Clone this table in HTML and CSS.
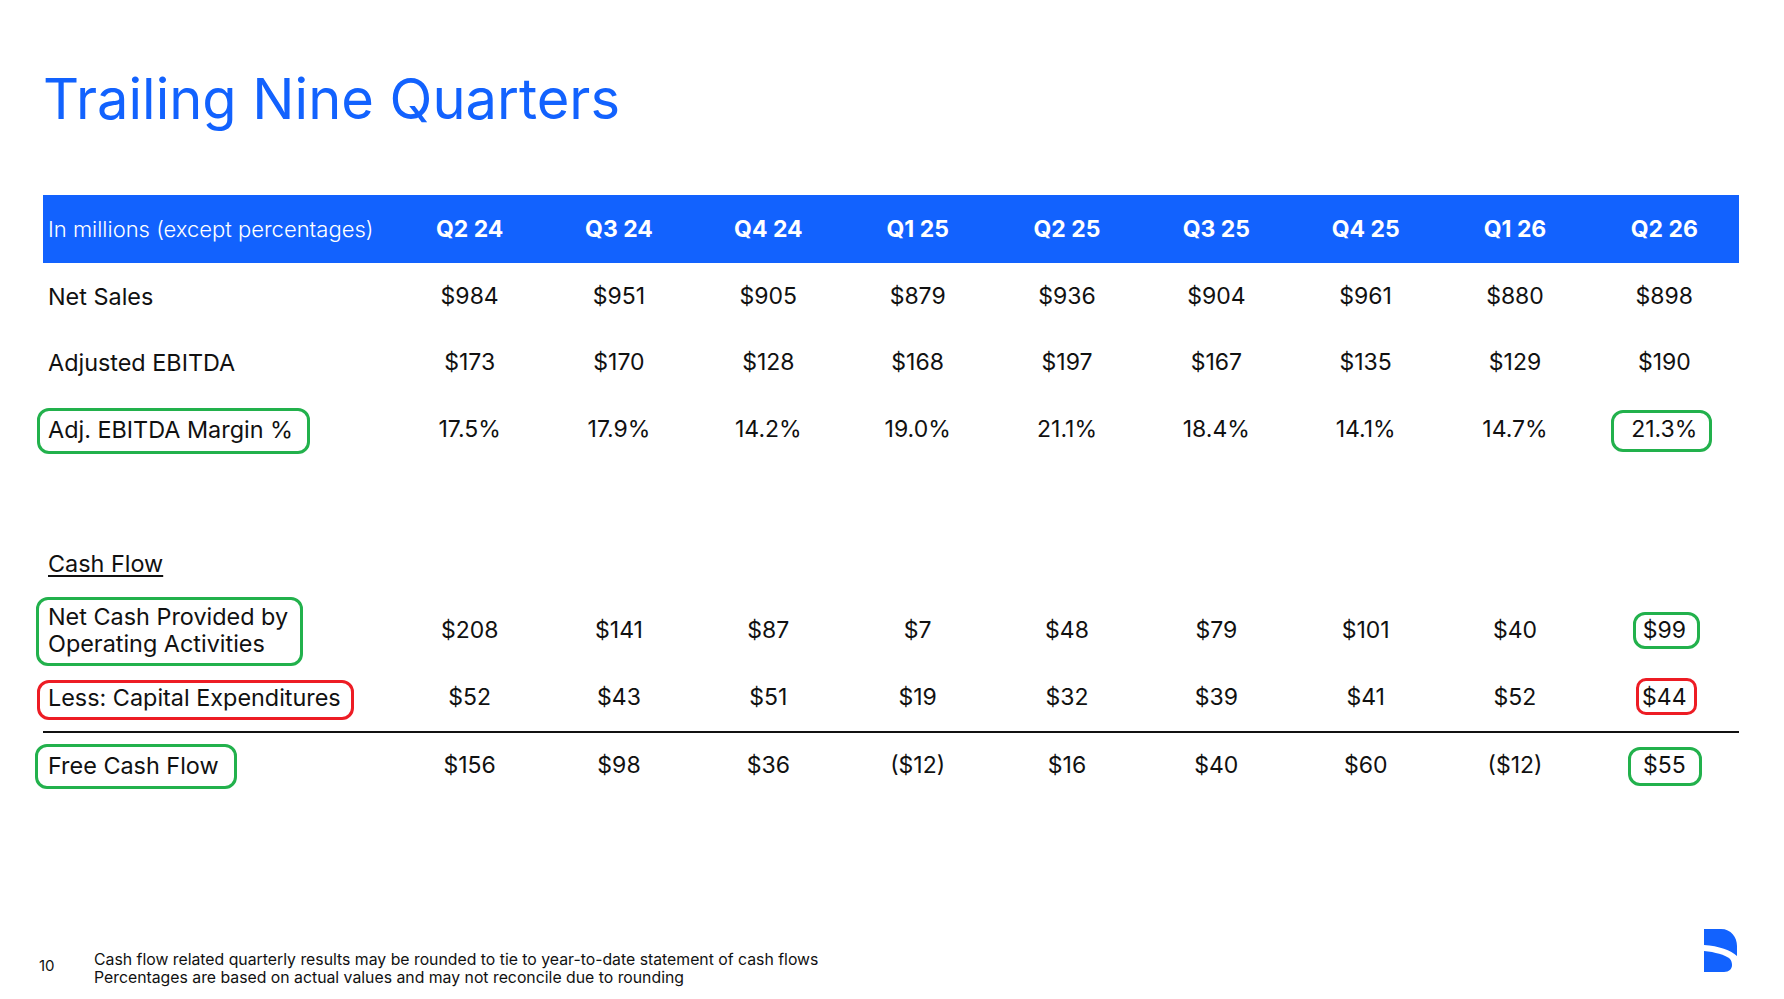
FILE: index.html
```html
<!DOCTYPE html>
<html lang="en">
<head>
<meta charset="utf-8">
<title>Trailing Nine Quarters</title>
<link rel="stylesheet" href="styles.css">
</head>
<body>
<div class="page">
  <h1 class="title">Trailing Nine Quarters</h1>

  <div class="table">
    <div class="row head">
      <div class="label">In millions (except percentages)</div>
      <div class="cell">Q2 24</div><div class="cell">Q3 24</div><div class="cell">Q4 24</div>
      <div class="cell">Q1 25</div><div class="cell">Q2 25</div><div class="cell">Q3 25</div>
      <div class="cell">Q4 25</div><div class="cell">Q1 26</div><div class="cell">Q2 26</div>
    </div>
    <div class="row">
      <div class="label">Net Sales</div>
      <div class="cell">$984</div><div class="cell">$951</div><div class="cell">$905</div>
      <div class="cell">$879</div><div class="cell">$936</div><div class="cell">$904</div>
      <div class="cell">$961</div><div class="cell">$880</div><div class="cell">$898</div>
    </div>
    <div class="row">
      <div class="label">Adjusted EBITDA</div>
      <div class="cell">$173</div><div class="cell">$170</div><div class="cell">$128</div>
      <div class="cell">$168</div><div class="cell">$197</div><div class="cell">$167</div>
      <div class="cell">$135</div><div class="cell">$129</div><div class="cell">$190</div>
    </div>
    <div class="row">
      <div class="label"><span class="hl green hl-margin">Adj. EBITDA Margin %</span></div>
      <div class="cell">17.5%</div><div class="cell">17.9%</div><div class="cell">14.2%</div>
      <div class="cell">19.0%</div><div class="cell">21.1%</div><div class="cell">18.4%</div>
      <div class="cell">14.1%</div><div class="cell">14.7%</div>
      <div class="cell"><span class="hl green hv-margin">21.3%</span></div>
    </div>

    <div class="spacer"></div>

    <div class="row">
      <div class="label"><span class="section">Cash Flow</span></div>
    </div>
    <div class="row">
      <div class="label"><span class="hl green hl-ocf">Net Cash Provided by<br>Operating Activities</span></div>
      <div class="cell">$208</div><div class="cell">$141</div><div class="cell">$87</div>
      <div class="cell">$7</div><div class="cell">$48</div><div class="cell">$79</div>
      <div class="cell">$101</div><div class="cell">$40</div>
      <div class="cell"><span class="hl green hv-ocf">$99</span></div>
    </div>
    <div class="row rule">
      <div class="label"><span class="hl red hl-capex">Less: Capital Expenditures</span></div>
      <div class="cell">$52</div><div class="cell">$43</div><div class="cell">$51</div>
      <div class="cell">$19</div><div class="cell">$32</div><div class="cell">$39</div>
      <div class="cell">$41</div><div class="cell">$52</div>
      <div class="cell"><span class="hl red hv-capex">$44</span></div>
    </div>
    <div class="row">
      <div class="label"><span class="hl green hl-fcf">Free Cash Flow</span></div>
      <div class="cell">$156</div><div class="cell">$98</div><div class="cell">$36</div>
      <div class="cell">($12)</div><div class="cell">$16</div><div class="cell">$40</div>
      <div class="cell">$60</div><div class="cell">($12)</div>
      <div class="cell"><span class="hl green hv-fcf">$55</span></div>
    </div>
  </div>

  <footer class="footer">
    <div class="pageno">10</div>
    <div class="notes">
      <div>Cash flow related quarterly results may be rounded to tie to year-to-date statement of cash flows</div>
      <div>Percentages are based on actual values and may not reconcile due to rounding</div>
    </div>
    <svg class="logo" viewBox="0 0 33 43" aria-hidden="true">
      <path d="M0 0 H17 C27 0 33 8 33 17 V27 C27 21.5 15 17 0 16 Z"/>
      <path d="M0 22 C11 23 21 26 25.5 29.5 C27.5 31.5 28 34 28 36 C28 40 25 43 20 43 H0 Z"/>
    </svg>
  </footer>
</div>
</body>
</html>
```
FILE: styles.css
```css
* { box-sizing: border-box; }

body {
  margin: 0;
  background: #ffffff;
  color: #111111;
  font-family: "Inter", "Open Sans", sans-serif;
}

.page {
  width: 1784px;
  height: 999px;
  padding: 0 45px 0 43px;
  display: flex;
  flex-direction: column;
  overflow: hidden;
}

.title {
  margin: 65px 0 0;
  font-size: 56px;
  line-height: 68px;
  font-weight: 400;
  color: #1262fe;
  letter-spacing: 0;
}

.table {
  margin-top: 62px;
  width: 1696px;
}

.row {
  display: grid;
  grid-template-columns: 352px repeat(9, 1fr);
  align-items: center;
  height: 66.5px;
  font-size: 23px;
  line-height: 27px;
}

.row .label {
  font-size: 23.4px;
}

.row.head {
  height: 68px;
  background: #1262fe;
  color: #ffffff;
}

.row.head .label {
  font-size: 22px;
  font-weight: 300;
}

.row.head .cell {
  font-size: 23px;
  font-weight: 700;
}

.row.rule {
  height: 69px;
  border-bottom: 2px solid #111111;
}

.spacer {
  height: 68px;
}

.label {
  padding-left: 5px;
  white-space: nowrap;
}

.cell {
  text-align: center;
  white-space: nowrap;
}

.section {
  text-decoration: underline;
  text-decoration-thickness: 1.5px;
  text-underline-offset: 3px;
}

/* hand-drawn style annotation boxes */
.hl {
  position: relative;
  display: inline-block;
}

.hl::after {
  content: "";
  position: absolute;
  border: 3px solid;
  border-radius: 12px;
  pointer-events: none;
}

.hl.green::after { border-color: #22b14c; }
.hl.red::after { border-color: #ed1c24; }

.hl-margin::after { left: -11px; right: -17px; top: -8px; bottom: -11px; }
.hl-ocf::after    { left: -12px; right: -15px; top: -6px; bottom: -9px; }
.hl-capex::after  { left: -11px; right: -13px; top: -4px; bottom: -9px; }
.hl-fcf::after    { left: -13px; right: -18px; top: -8px; bottom: -10px; }

.hv-margin::after { left: -20px; right: -15px; top: -6px; bottom: -9px; }
.hv-ocf::after    { left: -10px; right: -14px; top: -5px; bottom: -5px; }
.hv-capex::after  { left: -6px;  right: -10px; top: -6px; bottom: -4px; border-radius: 10px; }
.hv-fcf::after    { left: -15px; right: -16px; top: -5px; bottom: -7px; }

.footer {
  margin-top: auto;
  height: 70px;
  display: flex;
  align-items: flex-start;
  font-size: 15.8px;
  line-height: 17.5px;
  color: #111111;
}

.pageno {
  width: 55px;
  margin-left: -4px;
  margin-top: 28px;
  font-size: 15px;
}

.notes {
  margin-top: 22px;
}

.logo {
  margin-left: auto;
  margin-right: 2px;
  width: 33px;
  height: 43px;
  fill: #1262fe;
}
```
